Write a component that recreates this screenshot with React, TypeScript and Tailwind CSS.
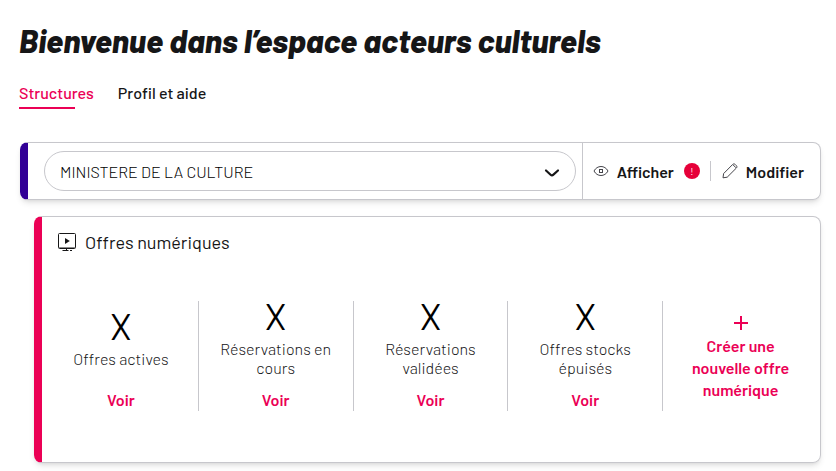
import { useState } from 'react';

interface Stat {
  label: string;
  value: string;
}

const structures = ['MINISTERE DE LA CULTURE'];

const stats: Stat[] = [
  { label: 'Offres actives', value: 'X' },
  { label: 'Réservations en cours', value: 'X' },
  { label: 'Réservations validées', value: 'X' },
  { label: 'Offres stocks épuisés', value: 'X' },
];

function EyeIcon() {
  return (
    <svg width="16" height="12" viewBox="0 0 16 12" fill="none" stroke="#45454b" aria-hidden="true">
      <path d="M1 6C2.600 3 5.200 1.500 8 1.500S13.400 3 15 6c-1.600 3-4.200 4.500-7 4.500S2.600 9 1 6Z" />
      <rect x="6.500" y="4.500" width="3" height="3" />
    </svg>
  );
}

function PencilIcon() {
  return (
    <svg width="16" height="16" viewBox="0 0 16 16" fill="none" stroke="#45454b" strokeLinejoin="round" aria-hidden="true">
      <path d="M1 14.800l.6-4.200L10.600 1.500c.8-.8 1.900-.8 2.700 0l1 1c.8.800.8 1.800 0 2.600L5.200 14.200 1 14.800ZM11 1.800l3 3" />
    </svg>
  );
}

function ScreenIcon() {
  return (
    <svg width="20" height="20" viewBox="0 0 20 20" fill="none" stroke="#161617" aria-hidden="true">
      <rect x="1.500" y="1.500" width="17" height="15" rx="1" />
      <path d="M2 15.500h16" strokeOpacity="0.5" />
      <path d="M9.500 16v2M5.500 18.500h6M13 18.500h2" />
      <path d="M8 6v6L12.800 9Z" fill="#161617" stroke="none" />
    </svg>
  );
}

export default function App() {
  const [tab, setTab] = useState('Structures');
  const [structure, setStructure] = useState(structures[0]);

  return (
    <main className="bg-white pt-5 pr-[15px] pb-2 pl-4 font-['Barlow','Roboto',sans-serif] text-base text-[#161617]">
      <h1 className="ml-[3px] text-[32px] leading-10 font-extrabold italic">Bienvenue dans l’espace acteurs culturels</h1>

      <nav className="mt-[23px] ml-[3px] flex gap-6 font-medium">
        {['Structures', 'Profil et aide'].map((name) => (
          <button
            key={name}
            type="button"
            onClick={() => setTab(name)}
            className={tab === name ? 'text-[#eb0055]' : 'hover:text-[#eb0055]'}
          >
            <span className="block leading-5">{name}</span>
            <span className={tab === name ? 'mt-1 block h-[2px] w-3/4 bg-[#eb0055]' : 'mt-1 block h-[2px]'} />
          </button>
        ))}
      </nav>

      <section className="mt-[33px] ml-1 flex h-[58px] rounded-lg border border-l-8 border-[#c7c7cc] border-l-[#320096] shadow-md">
        <div className="relative my-2 ml-4 mr-[6px] flex-1">
          <select
            aria-label="Structure"
            value={structure}
            onChange={(e) => setStructure(e.target.value)}
            className="h-10 w-full appearance-none rounded-full border border-[#c7c7cc] bg-white px-[15px] pt-[2px] font-light text-black"
          >
            {structures.map((s) => (
              <option key={s}>{s}</option>
            ))}
          </select>
          <svg className="pointer-events-none absolute top-4 right-4 h-3 w-4" viewBox="0 0 16 12" fill="none" stroke="#161617" strokeWidth="2.200" strokeLinecap="round" aria-hidden="true">
            <path d="M2 3.500l4.600 4.200c.8.700 2 .700 2.800 0L14 3.500" />
          </svg>
        </div>
        <div className="flex items-center border-l border-[#c7c7cc] pr-4 pl-[10px] font-semibold">
          <a href="#afficher" className="flex items-center gap-2">
            <EyeIcon />
            <span className="pt-[2px]">Afficher</span>
            <span className="ml-[2px] flex size-4 items-center justify-center rounded-full bg-[#e60039] text-[10px] font-normal text-white">!</span>
          </a>
          <span className="mr-[11px] ml-[10px] h-5 w-px bg-[#c7c7cc]" />
          <a href="#modifier" className="flex items-center gap-2">
            <PencilIcon />
            <span className="pt-[2px]">Modifier</span>
          </a>
        </div>
      </section>

      <section className="mt-4 ml-[18px] h-[247px] rounded-lg border border-l-8 border-[#c7c7cc] border-l-[#eb0055] shadow-md">
        <h2 className="flex items-center gap-2 px-[15px] pt-[13px] text-lg leading-6">
          <ScreenIcon />
          Offres numériques
        </h2>

        <div className="mx-[2px] mt-[47px] grid h-[110px] grid-cols-5 text-center">
          {stats.map((stat) => (
            <div key={stat.label} className="flex flex-col border-r border-[#c7c7cc] px-4">
              <div className="flex h-[71px] flex-col items-center justify-center">
                <span className="mb-[3px] text-[36px] leading-10 text-black">{stat.value}</span>
                <span className="leading-[19px] font-light">{stat.label}</span>
              </div>
              <a href="#voir" className="mt-[18px] leading-5 font-semibold text-[#eb0055]">
                Voir
              </a>
            </div>
          ))}
          <a href="#creer" className="flex flex-col items-center px-6 pt-[15px] leading-[22px] font-semibold text-[#eb0055]">
            <svg className="mb-[5px] shrink-0" width="14" height="14" viewBox="0 0 14 14" stroke="currentColor" strokeWidth="2" aria-hidden="true">
              <path d="M7 0v14M0 7h14" />
            </svg>
            Créer une nouvelle offre numérique
          </a>
        </div>
      </section>
    </main>
  );
}
